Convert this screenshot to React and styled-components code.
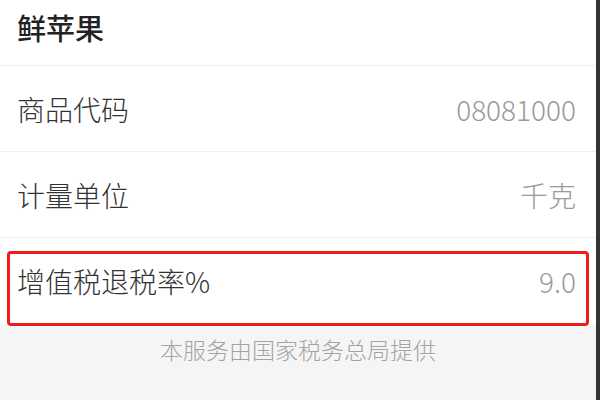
import React from 'react'
import styled, { createGlobalStyle } from 'styled-components'

const GlobalStyle = createGlobalStyle`
  html, body {
    margin: 0;
    padding: 0;
    width: 600px;
    height: 400px;
    overflow: hidden;
    background: #f5f5f5;
    font-family: "Noto Sans CJK SC", "Noto Sans", sans-serif;
  }
`

const rows = [
  { label: '商品代码', value: '08081000' },
  { label: '计量单位', value: '千克' },
  { label: '增值税退税率%', value: '9.0', marked: true },
]

const App = () => {
  return (
    <Screen>
      <GlobalStyle />
      <Page>
        <List>
          <TitleRow>鲜苹果</TitleRow>
          {rows.map(row => (
            <Row key={row.label} $last={row.marked}>
              <Label>{row.label}</Label>
              <Value>{row.value}</Value>
              {row.marked && <Mark />}
            </Row>
          ))}
        </List>
        <Footer>本服务由国家税务总局提供</Footer>
      </Page>
      <Edge />
    </Screen>
  )
}

export default App

const Screen = styled.div`
  display: flex;
  width: 600px;
  height: 400px;
`

const Page = styled.div`
  flex: 1;
  display: flex;
  flex-direction: column;
  background: #f5f5f5;
`

const Edge = styled.div`
  width: 4px;
  background: #343434;
`

const List = styled.div`
  background: #fff;
`

const TitleRow = styled.div`
  height: 66px;
  box-sizing: border-box;
  padding: 11px 17px 0;
  font-size: 29px;
  line-height: 32px;
  font-weight: 500;
  color: #222;
  border-bottom: 1px solid #efefef;
`

const Row = styled.div`
  position: relative;
  height: 86px;
  box-sizing: border-box;
  padding: 0 20px 0 17px;
  display: flex;
  align-items: center;
  justify-content: space-between;
  border-bottom: ${p => (p.$last ? 'none' : '1px solid #efefef')};
  font-size: 28px;
  font-weight: 300;
`

const Label = styled.div`
  color: #333;
`

const Value = styled.div`
  color: #9a9a9a;
`

const Mark = styled.div`
  position: absolute;
  top: 13px;
  left: 7px;
  right: 7px;
  bottom: -2px;
  border: 3px solid #f01c1c;
  border-radius: 4px;
  pointer-events: none;
`

const Footer = styled.div`
  flex: 1;
  padding-top: 10px;
  text-align: center;
  font-size: 23px;
  line-height: 30px;
  font-weight: 300;
  color: #a3a3a3;
`
